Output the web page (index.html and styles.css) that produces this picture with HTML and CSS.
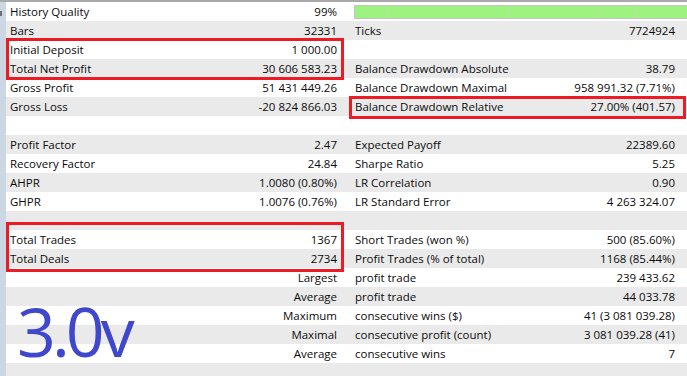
FILE: index.html
```html
<!DOCTYPE html>
<html>
<head>
<meta charset="utf-8">
<link rel="stylesheet" href="styles.css">
</head>
<body>
<div class="report">
  <div class="strip"><span class="strip-mark"></span></div>
  <div class="table">
    <div class="row"><span class="lbl">History Quality</span><span class="val">99%</span><span class="rlbl bar-cell"><span class="bar"><i class="seg s1"></i><i class="seg s2"></i><i class="seg s3"></i><i class="seg s4"></i><i class="seg s5"></i></span></span></div>
    <div class="row"><span class="lbl">Bars</span><span class="val">32331</span><span class="rlbl">Ticks</span><span class="rval">7724924</span></div>
    <div class="row"><span class="lbl">Initial Deposit</span><span class="val">1 000.00</span><span class="rlbl"></span><span class="rval"></span></div>
    <div class="row"><span class="lbl">Total Net Profit</span><span class="val">30 606 583.23</span><span class="rlbl">Balance Drawdown Absolute</span><span class="rval">38.79</span></div>
    <div class="row"><span class="lbl">Gross Profit</span><span class="val">51 431 449.26</span><span class="rlbl">Balance Drawdown Maximal</span><span class="rval">958 991.32 (7.71%)</span></div>
    <div class="row"><span class="lbl">Gross Loss</span><span class="val">-20 824 866.03</span><span class="rlbl">Balance Drawdown Relative</span><span class="rval">27.00% (401.57)</span></div>
    <div class="row"><span class="lbl"></span><span class="val"></span><span class="rlbl"></span><span class="rval"></span></div>
    <div class="row"><span class="lbl">Profit Factor</span><span class="val">2.47</span><span class="rlbl">Expected Payoff</span><span class="rval">22389.60</span></div>
    <div class="row"><span class="lbl">Recovery Factor</span><span class="val">24.84</span><span class="rlbl">Sharpe Ratio</span><span class="rval">5.25</span></div>
    <div class="row"><span class="lbl">AHPR</span><span class="val">1.0080 (0.80%)</span><span class="rlbl">LR Correlation</span><span class="rval">0.90</span></div>
    <div class="row"><span class="lbl">GHPR</span><span class="val">1.0076 (0.76%)</span><span class="rlbl">LR Standard Error</span><span class="rval">4 263 324.07</span></div>
    <div class="row"><span class="lbl"></span><span class="val"></span><span class="rlbl"></span><span class="rval"></span></div>
    <div class="row"><span class="lbl">Total Trades</span><span class="val">1367</span><span class="rlbl">Short Trades (won %)</span><span class="rval">500 (85.60%)</span></div>
    <div class="row"><span class="lbl">Total Deals</span><span class="val">2734</span><span class="rlbl">Profit Trades (% of total)</span><span class="rval">1168 (85.44%)</span></div>
    <div class="row"><span class="lbl"></span><span class="val">Largest</span><span class="rlbl">profit trade</span><span class="rval">239 433.62</span></div>
    <div class="row"><span class="lbl"></span><span class="val">Average</span><span class="rlbl">profit trade</span><span class="rval">44 033.78</span></div>
    <div class="row"><span class="lbl"></span><span class="val">Maximum</span><span class="rlbl">consecutive wins ($)</span><span class="rval">41 (3 081 039.28)</span></div>
    <div class="row"><span class="lbl"></span><span class="val">Maximal</span><span class="rlbl">consecutive profit (count)</span><span class="rval">3 081 039.28 (41)</span></div>
    <div class="row"><span class="lbl"></span><span class="val">Average</span><span class="rlbl">consecutive wins</span><span class="rval">7</span></div>
    <div class="row"><span class="lbl"></span><span class="val"></span><span class="rlbl"></span><span class="rval"></span></div>
  </div>
  <div class="mark mark-deposit"></div>
  <div class="mark mark-relative"></div>
  <div class="mark mark-trades"></div>
  <div class="version">3.0v</div>
</div>
</body>
</html>
```
FILE: styles.css
```css
html, body {
  margin: 0;
  padding: 0;
  background: #ffffff;
  overflow: hidden;
}
.report {
  position: relative;
  width: 687px;
  height: 376px;
  display: flex;
  border-top: 2px solid #a9a9a9;
  box-sizing: border-box;
  font-family: "Open Sans", "Noto Sans", sans-serif;
  font-size: 11.5px;
  color: #0a0a0a;
  overflow: hidden;
}
.strip {
  position: relative;
  width: 6px;
  flex: none;
  background: #cbd7e3;
}
.strip-mark {
  position: absolute;
  left: 0;
  top: 9px;
  width: 2px;
  height: 5px;
  background: #6a7480;
}
.table {
  flex: 1;
  display: flex;
  flex-direction: column;
}
.row {
  flex: none;
  display: grid;
  grid-template-columns: 170px 167px 200px 144px;
  height: 19px;
  align-items: center;
  white-space: nowrap;
}
.row:nth-child(even) {
  background: #eaeaea;
}
.lbl {
  padding-left: 4px;
}
.val {
  text-align: right;
  padding-right: 6px;
}
.rlbl {
  padding-left: 12px;
}
.rval {
  text-align: right;
  padding-right: 12px;
}
.bar-cell {
  grid-column: 3 / 5;
  padding-left: 11px;
  height: 19px;
  display: flex;
  align-items: center;
}
.bar {
  display: flex;
  width: 100%;
  height: 14px;
  box-sizing: border-box;
  border: 1px solid #c4c4c4;
  border-right: none;
  background: #9ef27f;
}
.seg {
  height: 100%;
  border-right: 1px solid #b6e4a6;
}
.s1 { width: 32px; }
.s2 { width: 120px; }
.s3 { width: 89px; }
.s4 { width: 36px; }
.s5 { flex: 1; border-right: none; }
.mark {
  position: absolute;
  border: 3px solid #ed1c24;
  box-sizing: border-box;
}
.mark-deposit {
  left: 6px;
  top: 36px;
  width: 338px;
  height: 42px;
}
.mark-relative {
  left: 349px;
  top: 94px;
  width: 337px;
  height: 23px;
}
.mark-trades {
  left: 6px;
  top: 220px;
  width: 338px;
  height: 50px;
}
.version {
  position: absolute;
  left: 17px;
  top: 295px;
  font-family: "Open Sans", sans-serif;
  font-size: 68px;
  line-height: 68px;
  letter-spacing: -4px;
  color: #3f48cc;
}
```
